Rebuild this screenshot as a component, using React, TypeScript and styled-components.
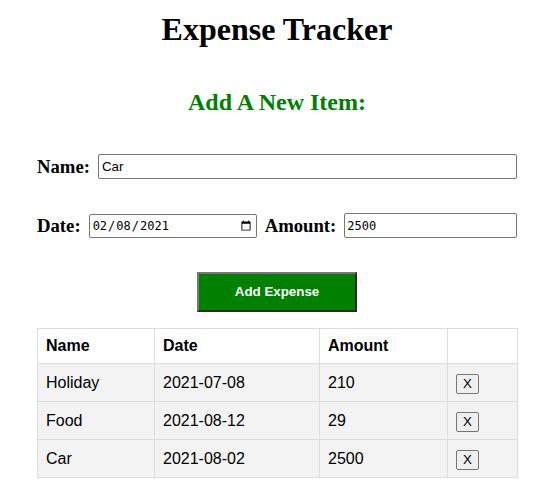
import React, { useState } from "react";
import styled, { createGlobalStyle } from "styled-components";

interface Expense {
    id: number;
    name: string;
    date: string;
    amount: number;
}

const GlobalStyle = createGlobalStyle`
    html, body {
        margin: 0;
        padding: 0;
        background: #fff;
    }
    body {
        font-family: "Liberation Serif", "Times New Roman", serif;
        color: #000;
    }
`;

export default function App() {
    const [name, setName] = useState<string>("Car");
    const [date, setDate] = useState<string>("2021-02-08");
    const [amount, setAmount] = useState<string>("2500");
    const [expenses, setExpenses] = useState<Expense[]>([
        { id: 1, name: "Holiday", date: "2021-07-08", amount: 210 },
        { id: 2, name: "Food", date: "2021-08-12", amount: 29 },
        { id: 3, name: "Car", date: "2021-08-02", amount: 2500 },
    ]);

    const handleSubmit = (event: React.FormEvent<HTMLFormElement>) => {
        event.preventDefault();
        if (!name || !date || !amount) return;
        setExpenses([
            ...expenses,
            { id: Date.now(), name, date, amount: Number(amount) },
        ]);
    };

    const removeExpense = (id: number) => {
        setExpenses(expenses.filter((e) => e.id !== id));
    };

    return (
        <Page>
            <GlobalStyle />
            <Title>Expense Tracker</Title>
            <Subtitle>Add A New Item:</Subtitle>
            <Form onSubmit={handleSubmit}>
                <FieldRow>
                    <Label htmlFor="name">Name:</Label>
                    <TextInput
                        id="name"
                        type="text"
                        value={name}
                        onChange={(e) => setName(e.target.value)}
                    />
                </FieldRow>
                <FieldRow>
                    <Label htmlFor="date">Date:</Label>
                    <DateInput
                        id="date"
                        type="date"
                        value={date}
                        onChange={(e) => setDate(e.target.value)}
                    />
                    <Label htmlFor="amount">Amount:</Label>
                    <AmountInput
                        id="amount"
                        type="text"
                        value={amount}
                        onChange={(e) => setAmount(e.target.value)}
                    />
                </FieldRow>
                <SubmitButton type="submit">Add Expense</SubmitButton>
            </Form>
            <Table>
                <colgroup>
                    <col style={{ width: 117 }} />
                    <col style={{ width: 165 }} />
                    <col style={{ width: 128 }} />
                    <col style={{ width: 70 }} />
                </colgroup>
                <thead>
                    <tr>
                        <Th>Name</Th>
                        <Th>Date</Th>
                        <Th>Amount</Th>
                        <Th></Th>
                    </tr>
                </thead>
                <tbody>
                    {expenses.map((expense) => (
                        <BodyRow key={expense.id}>
                            <Td>{expense.name}</Td>
                            <Td>{expense.date}</Td>
                            <Td>{expense.amount}</Td>
                            <Td>
                                <DeleteButton
                                    type="button"
                                    onClick={() => removeExpense(expense.id)}
                                >
                                    X
                                </DeleteButton>
                            </Td>
                        </BodyRow>
                    ))}
                </tbody>
            </Table>
        </Page>
    );
}

const Page = styled.div`
    width: 480px;
    margin-left: 37px;
    padding-top: 11px;
    display: flex;
    flex-direction: column;
`;

const Title = styled.h1`
    margin: 0;
    font-size: 32px;
    line-height: 37px;
    font-weight: bold;
    text-align: center;
`;

const Subtitle = styled.h2`
    margin: 40px 0 0;
    font-size: 24px;
    line-height: 28px;
    font-weight: bold;
    text-align: center;
    color: #008000;
`;

const Form = styled.form`
    display: flex;
    flex-direction: column;
    margin-top: 38px;
    gap: 34px;
`;

const FieldRow = styled.div`
    display: flex;
    align-items: center;
    gap: 8px;
`;

const Label = styled.label`
    font-size: 18.72px;
    font-weight: bold;
    line-height: 22px;
    white-space: nowrap;
`;

const BaseInput = styled.input`
    box-sizing: border-box;
    height: 25px;
    margin: 0;
    border: 1px solid #767676;
    border-radius: 2px;
    background: #fff;
    color: #000;
    outline: none;
`;

const TextInput = styled(BaseInput)`
    flex: 1;
    min-width: 0;
    padding: 1px 3px;
    font-family: "Liberation Sans", Arial, sans-serif;
    font-size: 13.33px;
`;

const DateInput = styled(BaseInput)`
    width: 168px;
    height: 24px;
    padding: 1px 2px;
    font-family: "DejaVu Sans Mono", monospace;
    font-size: 12px;
`;

const AmountInput = styled(BaseInput)`
    flex: 1;
    min-width: 0;
    padding: 1px 2px;
    font-family: "DejaVu Sans Mono", monospace;
    font-size: 12px;
`;

const SubmitButton = styled.button`
    align-self: center;
    box-sizing: border-box;
    width: 160px;
    height: 40px;
    border-style: solid;
    border-width: 2px;
    border-color: #777 #2a2a2a #2a2a2a #777;
    background: #008000;
    color: #fff;
    font-family: "Liberation Sans", Arial, sans-serif;
    font-size: 13.33px;
    font-weight: bold;
    line-height: 34px;
    cursor: pointer;
`;

const Table = styled.table`
    margin-top: 16px;
    width: 480px;
    border-collapse: collapse;
    table-layout: fixed;
    font-family: "Liberation Sans", Arial, sans-serif;
    font-size: 16px;
`;

const Th = styled.th`
    border: 1px solid #ddd;
    padding: 8px 8px;
    height: 34px;
    box-sizing: border-box;
    text-align: left;
    font-weight: bold;
    background: #fff;
`;

const BodyRow = styled.tr`
    background: #f3f3f3;
`;

const Td = styled.td`
    border: 1px solid #ddd;
    padding: 0 8px;
    height: 38px;
    box-sizing: border-box;
    text-align: left;
    vertical-align: middle;
`;

const DeleteButton = styled.button`
    box-sizing: border-box;
    height: 20px;
    padding: 0 6px;
    margin-top: 3px;
    border: 1px solid #767676;
    border-radius: 2px;
    background: #efefef;
    color: #000;
    font-family: "Liberation Sans", Arial, sans-serif;
    font-size: 13.33px;
    line-height: 16px;
    cursor: pointer;
`;
